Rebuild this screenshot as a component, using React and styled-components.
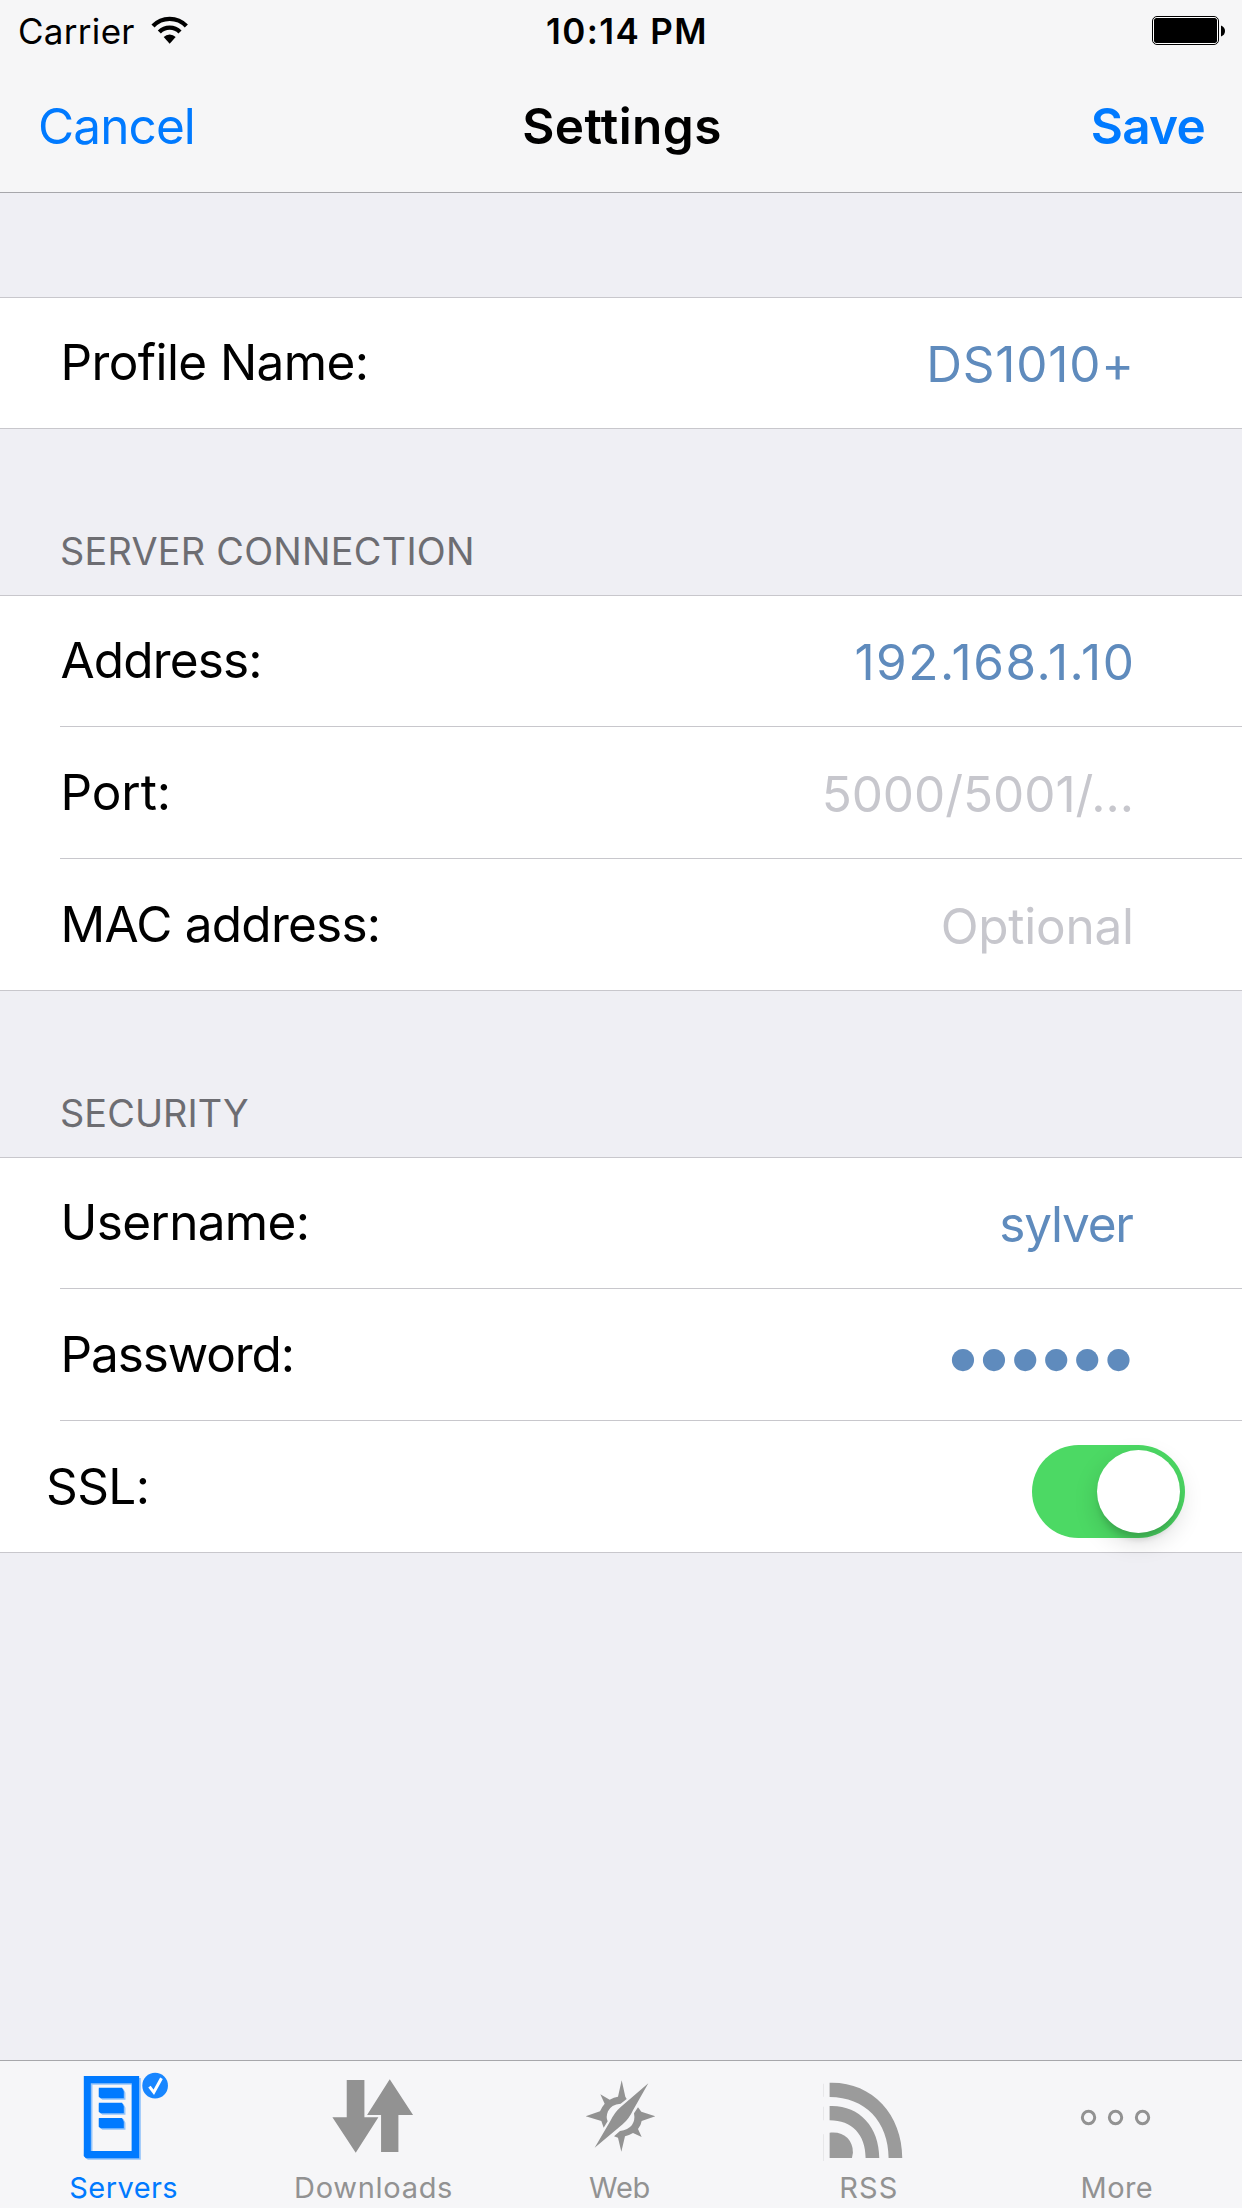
import React from "react";
import styled, { createGlobalStyle } from "styled-components";

const BLUE = "#007aff";
const GRAY = "#929292";

const GlobalStyle = createGlobalStyle`
  * { box-sizing: border-box; }
  body { margin: 0; background: #efeff4; }
`;

const Screen = styled.div`
  width: 1242px;
  height: 2208px;
  display: flex;
  flex-direction: column;
  background: #efeff4;
  color: #000;
  font-family: Inter, Roboto, sans-serif;
  font-size: 49.5px;
  overflow: hidden;
`;

const Header = styled.header`
  height: 193px;
  background: #f6f6f7;
  border-bottom: 1px solid #a7a7ab;
`;

const StatusBar = styled.div`
  height: 62px;
  padding: 0 17px 0 18px;
  display: grid;
  grid-template-columns: 1fr auto 1fr;
  align-items: center;
  font-size: 35px;
  line-height: 44px;
`;

const Carrier = styled.div`
  display: flex;
  align-items: center;
  gap: 16px;
  letter-spacing: 0.3px;

  svg {
    margin-bottom: 3px;
  }
`;

const Time = styled.div`
  margin-left: 11px;
  font-weight: 600;
  letter-spacing: 1.38px;
`;

const Battery = styled.svg`
  justify-self: end;
  margin-bottom: 1px;
`;

const NavBar = styled.nav`
  height: 130px;
  padding: 0 37px 2px 38px;
  display: grid;
  grid-template-columns: 1fr auto 1fr;
  align-items: center;
  line-height: 60px;
`;

const NavButton = styled.button`
  justify-self: ${(p) => (p.$end ? "end" : "start")};
  padding: 0;
  border: 0;
  background: none;
  font: inherit;
  font-weight: ${(p) => (p.$end ? 600 : 400)};
  letter-spacing: ${(p) => (p.$end ? -0.74 : -0.9)}px;
  color: ${BLUE};
`;

const Title = styled.h1`
  margin: 0 0 0 1px;
  font-size: inherit;
  font-weight: 600;
  letter-spacing: 0.42px;
`;

const Form = styled.main`
  flex: 1;
  padding-top: 104px;
`;

const SectionTitle = styled.h2`
  margin: 0;
  height: 166px;
  padding: 0 60px 24px;
  display: flex;
  align-items: flex-end;
  font-size: 37.8px;
  font-weight: 400;
  line-height: 40px;
  letter-spacing: ${(p) => p.$spacing}px;
  color: #6d6d72;
`;

const Row = styled.div`
  height: 131px;
  padding: 0 108px 34px 60.5px;
  display: flex;
  align-items: flex-end;
  justify-content: space-between;
  line-height: 60px;
`;

const SwitchRow = styled(Row)`
  padding: 0 57px 14px 46px;
`;

const Group = styled.section`
  background: #fff;
  border: solid #c8c7cc;
  border-width: 1px 0;

  ${Row}:first-child {
    height: 130px;
  }
`;

const Separator = styled.div`
  height: 1px;
  margin-left: 60px;
  background: #c8c7cc;
`;

const Label = styled.span`
  margin-bottom: ${(p) => p.$lift || 2}px;
  letter-spacing: ${(p) => p.$spacing}px;
`;

const Value = styled.span`
  margin-right: ${(p) => -p.$spacing}px;
  letter-spacing: ${(p) => p.$spacing}px;
  color: ${(p) => (p.$placeholder ? "#c7c7cd" : "#5f8bbd")};
`;

const Mask = styled(Value)`
  margin-right: 4.5px;
  margin-bottom: 1.5px;
  font-size: 71px;
`;

const Switch = styled.div`
  width: 153px;
  height: 93px;
  padding: 5px;
  display: flex;
  justify-content: flex-end;
  border-radius: 47px;
  background: #4cd964;
`;

const Knob = styled.div`
  width: 83px;
  height: 83px;
  border-radius: 50%;
  background: #fff;
  box-shadow: 0 9px 24px rgba(0, 0, 0, 0.15), 0 9px 6px -3px rgba(0, 0, 0, 0.14);
`;

const TabBar = styled.footer`
  height: 148px;
  display: flex;
  background: #f6f6f8;
  border-top: 1px solid #a7a7ab;
`;

const Tab = styled.div`
  flex: 1;
  display: flex;
  flex-direction: column;
  align-items: center;
  gap: 9px;
  color: ${(p) => (p.$active ? BLUE : GRAY)};
`;

const TabLabel = styled.span`
  margin-right: ${(p) => p.$pull || 0}px;
  font-size: 29px;
  line-height: 36px;
  letter-spacing: ${(p) => p.$spacing}px;
`;

const TabIcon = ({ x, children }) => (
  <svg width="140" height="100" viewBox={`${x} 33 420 300`} fill="currentColor">
    {children}
  </svg>
);

const WifiIcon = () => (
  <svg width="38" height="28" viewBox="449 46 114 84" fill="none" stroke="#000" strokeWidth="13">
    <path d="M455 76A69 69 0 0 1 555 76" />
    <path d="M474 94A43.500 43.500 0 0 1 536 94" />
    <path d="M487 109A25 25 0 0 1 523 109L505 129Z" fill="#000" stroke="none" />
  </svg>
);

const ServersIcon = () => (
  <TabIcon x={42.6}>
    <g opacity="0.4">
      <path d="M138 84H303V329H144L132 318Z M158 104V303H275V104Z" fillRule="evenodd" />
      <path d="M177 117H251L257 128V149H188L177 141Z M177 162H251L257 173V194H188L177 186Z M177 207H251L257 218V239H188L177 231Z" />
    </g>
    <path d="M132 78H298V325H138L132 318Z M153 100V303H276V100Z" fillRule="evenodd" />
    <path d="M177 113H247L252 124V145H183L177 140Z M177 158H247L252 169V190H183L177 185Z M177 204H247L252 215V235H183L177 230Z" />
    <circle cx="346" cy="107" r="38.500" opacity="0.9" />
    <path d="M329 110L342 127L365 85" fill="none" stroke="#fff" strokeWidth="9" />
  </TabIcon>
);

const DownloadsIcon = () => (
  <TabIcon x={97.8}>
    <path d="M229 90H282V202H324L256 308L186 202H229Z" />
    <path d="M358 88L428 195H384V306H332V195H290Z" />
  </TabIcon>
);

const WebIcon = () => (
  <TabIcon x={-27}>
    <path d="M265 100L219 181Q207 207 188 223L104 293L151 213Q164 186 183 170Z" />
    <path d="M77 199L120 184Q126 170 134 161L121 133L149 149Q162 142 174 140L185 91L196 140L200 147L182 161Q153 163 144 184Q137 201 143 214L131 233L124 213Z" />
    <path d="M286 199L245 213Q243 226 234 237L245 261L219 249Q207 256 195 259L184 305L174 263L162 259L180 243Q204 240 216 225Q226 211 222 190L234 172L244 185Z" />
  </TabIcon>
);

const RssIcon = () => (
  <TabIcon x={28.2}>
    <g fill="#9b9b9b">
      <path d="M120 98C244 94 338 190 338 324H297C297 215 226 141 120 141Z" />
      <path d="M120 168C206 164 269 228 269 324H228C228 254 187 211 120 211Z" />
      <path d="M120 248C162 243 190 268 190 308L187 324H120Z" />
      <path d="M101 101H103V140H101Z M101 170H103V211H101Z M101 253H103V338H101Z" opacity="0.25" />
    </g>
  </TabIcon>
);

const MoreIcon = () => (
  <TabIcon x={774.4}>
    <g fill="none" stroke="currentColor" strokeWidth="9">
      <circle cx="896" cy="202.500" r="18.500" />
      <circle cx="977" cy="202.500" r="18.500" />
      <circle cx="1058" cy="202.500" r="18.500" />
    </g>
  </TabIcon>
);

export default function App() {
  return (
    <Screen>
      <GlobalStyle />
      <Header>
        <StatusBar>
          <Carrier>
            Carrier
            <WifiIcon />
          </Carrier>
          <Time>10:14 PM</Time>
          <Battery width="73" height="29" viewBox="0 0 73 29">
            <rect x="0.500" y="0.500" width="66" height="28" rx="4.500" fill="#fff" stroke="#000" />
            <rect x="2" y="2" width="63" height="25" rx="2.500" />
            <path d="M69 9.500Q73 11 73 15T69 20.500Z" />
          </Battery>
        </StatusBar>
        <NavBar>
          <NavButton>Cancel</NavButton>
          <Title>Settings</Title>
          <NavButton $end>Save</NavButton>
        </NavBar>
      </Header>

      <Form>
        <Group>
          <Row>
            <Label $spacing={-0.6}>Profile Name:</Label>
            <Value $spacing={0.8}>DS1010+</Value>
          </Row>
        </Group>

        <SectionTitle $spacing={0.27}>SERVER CONNECTION</SectionTitle>
        <Group>
          <Row>
            <Label $spacing={-0.85}>Address:</Label>
            <Value $spacing={1.52}>192.168.1.10</Value>
          </Row>
          <Separator />
          <Row>
            <Label $spacing={-0.1}>Port:</Label>
            <Value $placeholder $spacing={-0.05}>5000/5001/...</Value>
          </Row>
          <Separator />
          <Row>
            <Label $spacing={-0.75}>MAC address:</Label>
            <Value $placeholder $spacing={-0.25}>Optional</Value>
          </Row>
        </Group>

        <SectionTitle $spacing={0.1}>SECURITY</SectionTitle>
        <Group>
          <Row>
            <Label $spacing={-0.65}>Username:</Label>
            <Value $spacing={-1.2}>sylver</Value>
          </Row>
          <Separator />
          <Row>
            <Label $spacing={-1.1}>Password:</Label>
            <Mask $spacing={-8.85}>••••••</Mask>
          </Row>
          <Separator />
          <SwitchRow>
            <Label $spacing={-0.6} $lift={22}>SSL:</Label>
            <Switch>
              <Knob />
            </Switch>
          </SwitchRow>
        </Group>
      </Form>

      <TabBar>
        <Tab $active>
          <ServersIcon />
          <TabLabel $spacing={0.43} $pull={1}>Servers</TabLabel>
        </Tab>
        <Tab>
          <DownloadsIcon />
          <TabLabel $spacing={0.7} $pull={-2}>Downloads</TabLabel>
        </Tab>
        <Tab>
          <WebIcon />
          <TabLabel $spacing={-0.3} $pull={3}>Web</TabLabel>
        </Tab>
        <Tab>
          <RssIcon />
          <TabLabel $spacing={1.2} $pull={1}>RSS</TabLabel>
        </Tab>
        <Tab>
          <MoreIcon />
          <TabLabel $spacing={0.43} $pull={2}>More</TabLabel>
        </Tab>
      </TabBar>
    </Screen>
  );
}
